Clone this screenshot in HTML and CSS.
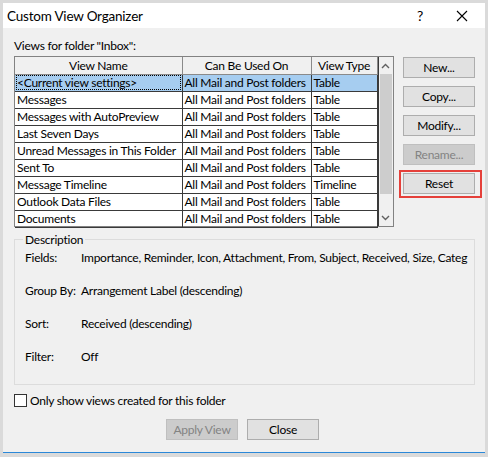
FILE: index.html
```html
<!DOCTYPE html>
<html>
<head>
<meta charset="utf-8">
<link rel="stylesheet" href="styles.css">
</head>
<body>
<div class="window">
  <div class="titlebar">
    <span class="title">Custom View Organizer</span>
    <span class="help">?</span>
    <svg class="close-x" width="12" height="12" viewBox="0 0 12 12"><path d="M1 1L11 11M11 1L1 11" stroke="#000" stroke-width="1.1" fill="none"/></svg>
  </div>
  <div class="content">
    <div class="label-views">Views for folder "Inbox":</div>
    <div class="main">
      <div class="listview">
        <table class="grid">
          <thead>
            <tr><th class="c1">View Name</th><th class="c2">Can Be Used On</th><th class="c3">View Type</th></tr>
          </thead>
          <tbody>
            <tr class="sel"><td>&lt;Current view settings&gt;</td><td>All Mail and Post folders</td><td>Table</td></tr>
            <tr><td>Messages</td><td>All Mail and Post folders</td><td>Table</td></tr>
            <tr><td>Messages with AutoPreview</td><td>All Mail and Post folders</td><td>Table</td></tr>
            <tr><td>Last Seven Days</td><td>All Mail and Post folders</td><td>Table</td></tr>
            <tr><td>Unread Messages in This Folder</td><td>All Mail and Post folders</td><td>Table</td></tr>
            <tr><td>Sent To</td><td>All Mail and Post folders</td><td>Table</td></tr>
            <tr><td>Message Timeline</td><td>All Mail and Post folders</td><td>Timeline</td></tr>
            <tr><td>Outlook Data Files</td><td>All Mail and Post folders</td><td>Table</td></tr>
            <tr><td>Documents</td><td>All Mail and Post folders</td><td>Table</td></tr>
          </tbody>
        </table>
        <div class="scrollbar">
          <div class="arrow"><svg width="9" height="6" viewBox="0 0 9 6"><path d="M1 5L4.5 1.5L8 5" stroke="#606060" stroke-width="1.4" fill="none"/></svg></div>
          <div class="track"><div class="thumb"></div></div>
          <div class="arrow"><svg width="9" height="6" viewBox="0 0 9 6"><path d="M1 1L4.5 4.5L8 1" stroke="#606060" stroke-width="1.4" fill="none"/></svg></div>
        </div>
      </div>
      <div class="side">
        <button class="btn">New...</button>
        <button class="btn">Copy...</button>
        <button class="btn">Modify...</button>
        <button class="btn disabled">Rename...</button>
        <div class="highlight"><button class="btn">Reset</button></div>
      </div>
    </div>
    <fieldset class="desc">
      <legend>Description</legend>
      <div class="drow"><span class="dk">Fields:</span><span class="dv">Importance, Reminder, Icon, Attachment, From, Subject, Received, Size, Categ</span></div>
      <div class="drow"><span class="dk">Group By:</span><span class="dv">Arrangement Label (descending)</span></div>
      <div class="drow"><span class="dk">Sort:</span><span class="dv">Received (descending)</span></div>
      <div class="drow"><span class="dk">Filter:</span><span class="dv">Off</span></div>
    </fieldset>
    <label class="check"><span class="box"></span>Only show views created for this folder</label>
    <div class="bottom">
      <button class="btn disabled">Apply View</button>
      <button class="btn">Close</button>
    </div>
  </div>
</div>
</body>
</html>
```
FILE: styles.css
```css
* { box-sizing: border-box; }
html, body { margin: 0; padding: 0; }
body {
  background: #dadada;
  width: 488px;
  height: 457px;
  font-family: "Lato", "Noto Sans", sans-serif;
  font-size: 12px;
  letter-spacing: -0.25px;
  color: #000;
  padding: 3px 3px 0 3px;
  overflow: hidden;
}
.window {
  width: 482px;
  height: 450px;
  background: #f0f0f0;
  border-bottom: 1px solid #2b88d8;
  display: flex;
  flex-direction: column;
}
.titlebar {
  height: 25px;
  background: #fff;
  display: flex;
  align-items: center;
  padding-left: 4px;
  flex: none;
}
.title { font-size: 13.5px; flex: 1; letter-spacing: -0.2px; }
.help { font-size: 14px; margin-right: 33px; }
.close-x { margin-right: 17px; }
.content {
  flex: 1;
  padding: 10px 10px 0 11px;
  display: flex;
  flex-direction: column;
}
.label-views { height: 18px; line-height: 16px; }
.main { display: flex; }
.listview {
  width: 380px;
  height: 171px;
  border: 1px solid #828282;
  background: #fff;
  display: flex;
}
.grid {
  border-collapse: collapse;
  table-layout: fixed;
  width: 362px;
  align-self: flex-start;
}
.grid th, .grid td {
  height: 17px;
  padding: 0 2px;
  font-weight: normal;
  white-space: nowrap;
  overflow: hidden;
  border: 1px solid #3a3a3a;
  line-height: 15px;
  text-align: left;
}
.grid tr:first-child th { border-top: none; }
.grid th:first-child, .grid td:first-child { border-left: none; }
.grid th { text-align: center; background: #f0f0f0; border-color: #8a8a8a; }
.grid th.c1 { width: 167px; }
.grid th.c2 { width: 129px; }
.grid th.c3 { width: 66px; }
.grid tr.sel td { background: #a6cdf0; }
.grid tr.sel td:first-child { outline: 1px dotted #000; outline-offset: -2px; }
.scrollbar {
  width: 17px;
  background: #f0f0f0;
  display: flex;
  flex-direction: column;
  border-left: 1px solid #3a3a3a;
}
.arrow { height: 17px; display: flex; align-items: center; justify-content: center; }
.track { flex: 1; padding: 0 1px; }
.thumb { height: 120px; background: #cdcdcd; }
.side {
  margin-left: 9px;
  display: flex;
  flex-direction: column;
  gap: 8px;
  padding-top: 1px;
}
.btn {
  width: 72px;
  height: 21px;
  background: #e1e1e1;
  border: 1px solid #adadad;
  font-family: inherit;
  font-size: 12px;
  letter-spacing: -0.25px;
  color: #000;
  padding: 0;
}
.btn.disabled { background: #cccccc; border-color: #bfbfbf; color: #838383; }
.highlight {
  border: 2px solid #e5403a;
  padding: 1px 2px;
  margin: -3px -7px 0 -4px;
  width: 83px;
  height: 28px;
}
.desc {
  margin: 5px 0 0 0;
  width: 461px;
  height: 153px;
  border: 1px solid #dcdcdc;
  padding: 0 0 0 10px;
}
.desc legend { padding: 0 2px; margin-left: -2px; }
.drow { display: flex; height: 33px; line-height: 16px; padding-top: 3px; }
.dk { width: 56px; flex: none; }
.dv { white-space: nowrap; }
.check { display: flex; align-items: center; margin-top: 7px; height: 16px; }
.box { width: 13px; height: 13px; border: 1px solid #333; background: #fff; margin-right: 3px; }
.bottom { display: flex; justify-content: flex-start; gap: 9px; margin-top: 11px; padding-left: 152px; }
```
